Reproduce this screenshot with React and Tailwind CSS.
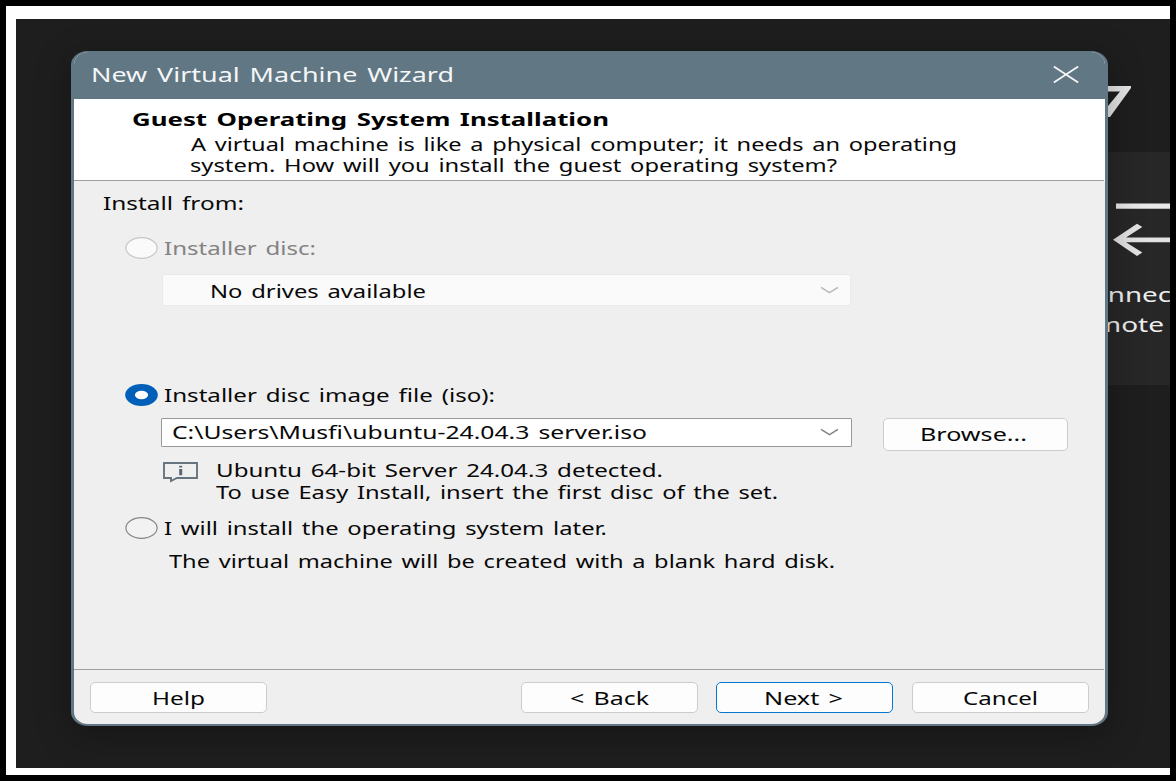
import { useLayoutEffect, useRef } from "react";

// One line of text, stretched horizontally to fill the given width.
function Line({ children, width, className = "" }) {
  const ref = useRef(null);
  useLayoutEffect(() => {
    const el = ref.current;
    el.style.transform = "none";
    el.style.transform = `scaleX(${width / el.getBoundingClientRect().width})`;
  }, [width, children]);
  return (
    <span className={`block h-5 shrink-0 text-left [word-spacing:2px] ${className}`} style={{ width }}>
      <span ref={ref} className="inline-block origin-left whitespace-pre align-top">
        {children}
      </span>
    </span>
  );
}

function Radio({ checked, disabled }) {
  return (
    <svg className="h-[22px] w-[33px] shrink-0" viewBox="0 0 33 22">
      {checked ? (
        <>
          <ellipse cx="16.5" cy="11" rx="16.3" ry="10.9" fill="#005fb8" />
          <ellipse cx="16.5" cy="11" rx="6.6" ry="4.2" fill="#fff" />
        </>
      ) : (
        <ellipse cx="16.5" cy="11" rx="15.6" ry="10.3" fill={disabled ? "#fafafa" : "#f2f2f2"} stroke={disabled ? "#c6c6c6" : "#858585"} strokeWidth="1.2" />
      )}
    </svg>
  );
}

function Chevron({ color }) {
  return (
    <svg className="h-2 w-[19px] shrink-0" viewBox="0 0 19 8" fill="none">
      <path d="M1 1.4L9.5 6.6L18 1.4" stroke={color} strokeWidth="1.6" />
    </svg>
  );
}

function Button({ children, width, className = "" }) {
  return (
    <button className={`flex items-center justify-center rounded-[5px] border bg-[#fdfdfd] ${className}`}>
      <Line width={width}>{children}</Line>
    </button>
  );
}

function Backdrop() {
  return (
    <div className="absolute inset-0 overflow-hidden">
      <div className="absolute top-[133px] right-0 h-[233px] w-[90px] bg-[#272727]" />
      <svg className="absolute top-[60px] right-0 h-[200px] w-[70px]" viewBox="1100 79 70 200">
        <path d="M1104 86H1131V88L1110 117H1099L1120 91.500H1104Z" fill="#e6e6e6" />
        <path d="M1116 203.500H1170V208.800H1116Z" fill="#e9e9e9" />
        <path d="M1113 239.700L1137 223.700L1142.300 227L1126 237.500H1170V242.200H1126L1142.300 252.500L1137 256Z" fill="#e2e2e2" />
      </svg>
      <div className="absolute top-[266px] left-[1090px] flex flex-col gap-2.5 text-[19px] leading-5 text-[#eeeeee]">
        <Line width={80} className="ml-[-15px]">onnec</Line>
        <Line width={69} className="ml-[-11px]">mote</Line>
      </div>
    </div>
  );
}

export default function App() {
  return (
    <div className="h-[781px] w-[1176px] overflow-hidden bg-black pt-1.5 pl-1.5 font-['Noto_Sans',sans-serif] text-[18.5px] leading-5 text-[#080808]">
      <div className="h-[769px] w-[1164px] bg-white pt-[13px] pl-[9.500px]">
        <div className="relative h-[749px] overflow-hidden bg-[#1e1e1e] pt-[31.500px] pl-[55px]">
          <Backdrop />
          <section className="relative flex h-[675px] w-[1037.500px] flex-col overflow-hidden rounded-[17px/14px] border-x-[3px] border-t border-b-2 border-[#617783] bg-[#efefef] shadow-[0_8px_36px_rgba(0,0,0,0.3)]">
            <header className="flex h-[47px] shrink-0 items-center justify-between bg-[#617783] pr-[26px] pl-[18px] text-[19px] text-[#f4f6f7]">
              <Line width={363} className="-ml-[0.500px]">New Virtual Machine Wizard</Line>
              <svg className="-mt-px h-[17px] w-[26px]" viewBox="0 0 26 17">
                <path d="M.8.500L25.200 16.500M25.200.500L.8 16.500" stroke="#f4f6f7" strokeWidth="1.800" />
              </svg>
            </header>

            <div className="mr-px flex h-[82px] shrink-0 flex-col border-b border-[#a0a0a0] bg-white pt-[10.500px] pl-[57px] shadow-[1px_0_0_#fff]">
              <Line width={477} className="ml-px font-bold text-black">Guest Operating System Installation</Line>
              <Line width={766} className="mt-[4.500px] ml-[60px]">A virtual machine is like a physical computer; it needs an operating</Line>
              <Line width={647} className="mt-px ml-[59px]">system. How will you install the guest operating system?</Line>
            </div>

            <main className="mr-px flex h-[489px] shrink-0 flex-col border-b border-[#a0a0a0] pt-3">
              <Line width={141} className="ml-[29px]">Install from:</Line>

              <div className="mt-[24px] ml-[51px] flex h-[22px] items-center gap-1.5 text-[#838383]">
                <Radio disabled />
                <Line width={152}>Installer disc:</Line>
              </div>
              <div className="mt-[15px] ml-[88px] flex h-8 w-[689px] items-center justify-between border border-[#eaeaea] bg-[#fafafa] pr-[11px] pl-[47.500px]">
                <Line width={216} className="mt-0.5">No drives available</Line>
                <Chevron color="#b9b9b9" />
              </div>

              <div className="mt-[78px] ml-[51px] flex h-[22px] items-center gap-1.5">
                <Radio checked />
                <Line width={331}>Installer disc image file (iso):</Line>
              </div>
              <div className="mt-3 ml-[87px] flex h-[34px] items-start">
                <div className="flex h-[29.500px] w-[691px] items-center justify-between rounded-[1px] border border-[#999999] bg-white pr-3 pl-2.5">
                  <Line width={475}>{"C:\\Users\\Musfi\\ubuntu-24.04.3 server.iso"}</Line>
                  <Chevron color="#858585" />
                </div>
                <Button width={107} className="ml-[31px] h-[33px] w-[185px] border-[#cccccc] pr-[3px]">Browse...</Button>
              </div>

              <div className="mt-[8px] ml-[89px] flex h-[43px] items-start">
                <svg className="mt-0.5 h-[21px] w-[35px]" viewBox="0 0 35 21" fill="none">
                  <path d="M1 1H34V16H14L8 19V16H1Z" stroke="#66747f" strokeWidth="1.900" />
                  <path d="M16.200 3.800H19.200V5.400H16.200ZM16.200 7H19.200V13.200H16.200Z" fill="#586773" />
                </svg>
                <div className="ml-[18px] flex flex-col gap-[2.500px]">
                  <Line width={447}>Ubuntu 64-bit Server 24.04.3 detected.</Line>
                  <Line width={562}>To use Easy Install, insert the first disc of the set.</Line>
                </div>
              </div>

              <div className="mt-[14px] ml-[51px] flex h-[22px] items-center gap-1.5">
                <Radio />
                <Line width={443}>I will install the operating system later.</Line>
              </div>
              <Line width={666} className="mt-[12px] ml-[95.500px]">The virtual machine will be created with a blank hard disk.</Line>
            </main>

            <footer className="flex grow items-start pt-3 pl-4">
              <Button width={53} className="h-[31px] w-[177px] border-[#cccccc] pt-px">Help</Button>
              <div className="ml-[254px] flex gap-[18.500px]">
                <Button width={79} className="h-[31px] w-[177px] border-[#cccccc] pt-px">{"< Back"}</Button>
                <Button width={79} className="h-[31px] w-[177px] border-[#0078d4] pt-px pr-[3px]">{"Next >"}</Button>
                <Button width={75} className="h-[31px] w-[177px] border-[#cccccc] pt-px">Cancel</Button>
              </div>
            </footer>
          </section>
        </div>
      </div>
    </div>
  );
}
